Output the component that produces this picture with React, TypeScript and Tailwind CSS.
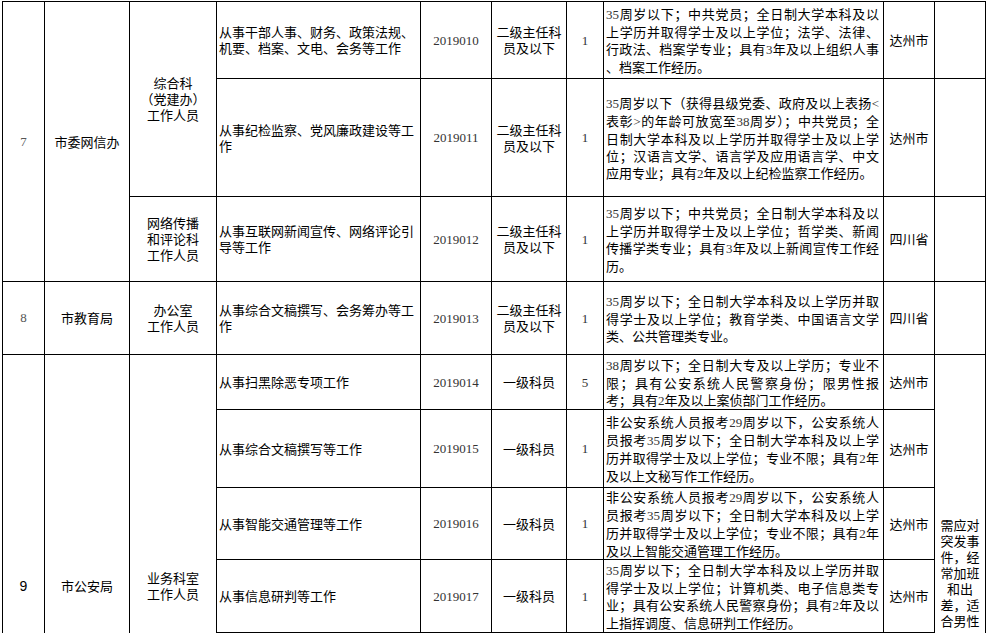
import React from 'react';

// digits and angle brackets are set in a serif face, as in the source sheet
const Num = ({ text }: { text: string }) => {
  const parts = text.split(/(\d+|[<>])/);
  return (
    <>
      {parts.map((p, i) =>
        /^(\d+|[<>])$/.test(p) ? (
          <span key={i} className="font-['Liberation_Serif',serif] text-[#333]">
            {p}
          </span>
        ) : (
          <React.Fragment key={i}>{p}</React.Fragment>
        )
      )}
    </>
  );
};

const Req = ({ lines }: { lines: string[] }) => (
  <div className="pl-[2px] pr-[4px] text-left leading-[17px]">
    {lines.map((l, i) => (
      <div key={i} className={i < lines.length - 1 ? '[text-align-last:justify]' : ''}>
        <Num text={l} />
      </div>
    ))}
  </div>
);

const Lines = ({ lines, left }: { lines: string[]; left?: boolean }) => (
  <div className={left ? 'pl-[2px] text-left leading-[16px]' : 'text-center leading-[16px]'}>
    {lines.map((l, i) => (
      <div key={i}>{l}</div>
    ))}
  </div>
);

const Code = ({ v }: { v: string }) => (
  <span className="font-['Liberation_Serif',serif] text-[13px] text-[#333]">{v}</span>
);

type Job = {
  h: string;
  duty: string[];
  code: string;
  level: string[];
  count: string;
  req: string[];
  place: string;
};

const jobs: Job[] = [
  {
    h: 'h-[77px]',
    duty: ['从事干部人事、财务、政策法规、', '机要、档案、文电、会务等工作'],
    code: '2019010',
    level: ['二级主任科', '员及以下'],
    count: '1',
    req: [
      '35周岁以下；中共党员；全日制大学本科及以',
      '上学历并取得学士及以上学位；法学、法律、',
      '行政法、档案学专业；具有3年及以上组织人事',
      '、档案工作经历。',
    ],
    place: '达州市',
  },
  {
    h: 'h-[118px]',
    duty: ['从事纪检监察、党风廉政建设等工', '作'],
    code: '2019011',
    level: ['二级主任科', '员及以下'],
    count: '1',
    req: [
      '35周岁以下（获得县级党委、政府及以上表扬<',
      '表彰>的年龄可放宽至38周岁）；中共党员；全',
      '日制大学本科及以上学历并取得学士及以上学',
      '位；汉语言文学、语言学及应用语言学、中文',
      '应用专业；具有2年及以上纪检监察工作经历。',
    ],
    place: '达州市',
  },
  {
    h: 'h-[85px]',
    duty: ['从事互联网新闻宣传、网络评论引', '导等工作'],
    code: '2019012',
    level: ['二级主任科', '员及以下'],
    count: '1',
    req: [
      '35周岁以下；中共党员；全日制大学本科及以',
      '上学历并取得学士及以上学位；哲学类、新闻',
      '传播学类专业；具有3年及以上新闻宣传工作经',
      '历。',
    ],
    place: '四川省',
  },
  {
    h: 'h-[73px]',
    duty: ['从事综合文稿撰写、会务筹办等工', '作'],
    code: '2019013',
    level: ['二级主任科', '员及以下'],
    count: '1',
    req: [
      '35周岁以下；全日制大学本科及以上学历并取',
      '得学士及以上学位；教育学类、中国语言文学',
      '类、公共管理类专业。',
    ],
    place: '四川省',
  },
  {
    h: 'h-[55px]',
    duty: ['从事扫黑除恶专项工作'],
    code: '2019014',
    level: ['一级科员'],
    count: '5',
    req: [
      '38周岁以下；全日制大专及以上学历；专业不',
      '限；具有公安系统人民警察身份；限男性报',
      '考；具有2年及以上案侦部门工作经历。',
    ],
    place: '达州市',
  },
  {
    h: 'h-[78px]',
    duty: ['从事综合文稿撰写等工作'],
    code: '2019015',
    level: ['一级科员'],
    count: '1',
    req: [
      '非公安系统人员报考29周岁以下，公安系统人',
      '员报考35周岁以下；全日制大学本科及以上学',
      '历并取得学士及以上学位；专业不限；具有2年',
      '及以上文秘写作工作经历。',
    ],
    place: '达州市',
  },
  {
    h: 'h-[71px]',
    duty: ['从事智能交通管理等工作'],
    code: '2019016',
    level: ['一级科员'],
    count: '1',
    req: [
      '非公安系统人员报考29周岁以下，公安系统人',
      '员报考35周岁以下；全日制大学本科及以上学',
      '历并取得学士及以上学位；专业不限；具有2年',
      '及以上智能交通管理工作经历。',
    ],
    place: '达州市',
  },
  {
    h: 'h-[73px]',
    duty: ['从事信息研判等工作'],
    code: '2019017',
    level: ['一级科员'],
    count: '1',
    req: [
      '35周岁以下；全日制大学本科及以上学历并取',
      '得学士及以上学位；计算机类、电子信息类专',
      '业；具有公安系统人民警察身份；具有2年及以',
      '上指挥调度、信息研判工作经历。',
    ],
    place: '达州市',
  },
];

const td = 'border border-black p-0 align-middle';

const JobCells = ({ j }: { j: Job }) => (
  <>
    <td className={td}>
      <Lines lines={j.duty} left />
    </td>
    <td className={`${td} text-center`}>
      <Code v={j.code} />
    </td>
    <td className={td}>
      <Lines lines={j.level} />
    </td>
    <td className={`${td} text-center`}>
      <Code v={j.count} />
    </td>
    <td className={td}>
      <Req lines={j.req} />
    </td>
    <td className={`${td} text-center`}>{j.place}</td>
  </>
);

export default function App() {
  return (
    <div className="h-[633px] w-[987px] overflow-hidden bg-white">
      <table className="ml-[2px] mt-px w-[983px] table-fixed border-collapse font-['Noto_Sans_CJK_SC',sans-serif] text-[13px] text-black">
        <colgroup>
          <col className="w-[42px]" />
          <col className="w-[85px]" />
          <col className="w-[87px]" />
          <col className="w-[204px]" />
          <col className="w-[71px]" />
          <col className="w-[75px]" />
          <col className="w-[37px]" />
          <col className="w-[280px]" />
          <col className="w-[51px]" />
          <col className="w-[51px]" />
        </colgroup>
        <tbody>
          <tr className={jobs[0].h}>
            <td rowSpan={3} className={`${td} text-center font-['Liberation_Serif',serif] text-[#555]`}>
              7
            </td>
            <td rowSpan={3} className={`${td} text-center`}>
              市委网信办
            </td>
            <td rowSpan={2} className={td}>
              <Lines lines={['综合科', '（党建办）', '工作人员']} />
            </td>
            <JobCells j={jobs[0]} />
            <td className={td}></td>
          </tr>
          <tr className={jobs[1].h}>
            <JobCells j={jobs[1]} />
            <td className={td}></td>
          </tr>
          <tr className={jobs[2].h}>
            <td className={td}>
              <Lines lines={['网络传播', '和评论科', '工作人员']} />
            </td>
            <JobCells j={jobs[2]} />
            <td className={td}></td>
          </tr>
          <tr className={jobs[3].h}>
            <td className={`${td} text-center font-['Liberation_Serif',serif] text-[#555]`}>8</td>
            <td className={`${td} text-center`}>市教育局</td>
            <td className={td}>
              <Lines lines={['办公室', '工作人员']} />
            </td>
            <JobCells j={jobs[3]} />
            <td className={td}></td>
          </tr>
          <tr className={jobs[4].h}>
            <td rowSpan={6} className={`${td} text-center font-['Liberation_Sans',sans-serif] text-[14px]`}>
              9
            </td>
            <td rowSpan={6} className={`${td} text-center`}>
              市公安局
            </td>
            <td rowSpan={6} className={td}>
              <Lines lines={['业务科室', '工作人员']} />
            </td>
            <JobCells j={jobs[4]} />
            <td rowSpan={5} className={td}>
              <Lines lines={['需应对', '突发事', '件，经', '常加班', '和出', '差，适', '合男性']} />
            </td>
          </tr>
          {jobs.slice(5).map((j) => (
            <tr key={j.code} className={j.h}>
              <JobCells j={j} />
            </tr>
          ))}
          <tr className="h-[158px]">
            <td className={td}></td>
            <td className={td}></td>
            <td className={td}></td>
            <td className={td}></td>
            <td className={td}></td>
            <td className={td}></td>
          </tr>
          <tr className="h-[27px]">
            <td className={td}></td>
            <td className={td}></td>
            <td className={td}></td>
            <td className={td}></td>
            <td className={td}></td>
            <td className={td}></td>
            <td className={td}></td>
          </tr>
        </tbody>
      </table>
    </div>
  );
}
